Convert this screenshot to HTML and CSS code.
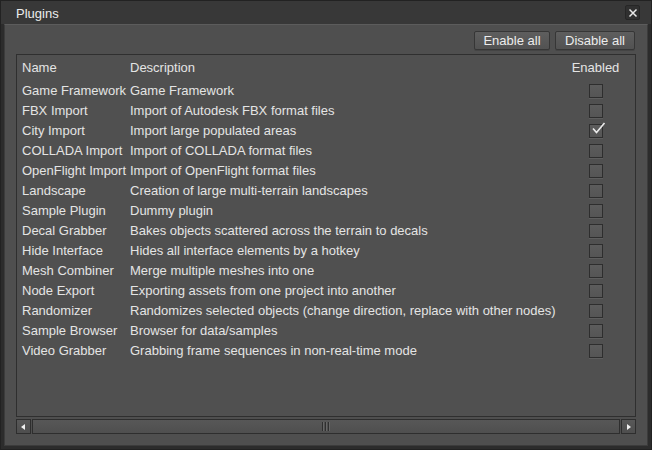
FILE: index.html
```html
<!DOCTYPE html>
<html lang="en">

<head>
    <meta charset="UTF-8">
    <title>Plugins</title>
    <link rel="stylesheet" href="styles.css">
</head>

<body>
    <div class="window">
        <div class="titlebar">
            <span class="title">Plugins</span>
            <button class="close">
                <svg width="10" height="10" viewBox="0 0 10 10"><path d="M1.5 1.5 L8.5 8.5 M8.5 1.5 L1.5 8.5" stroke="#e8e8e8" stroke-width="1.5" fill="none"/></svg>
            </button>
        </div>
        <div class="panel">
            <div class="actions">
                <button class="btn">Enable all</button>
                <button class="btn">Disable all</button>
            </div>
            <div class="list">
                <div class="row head">
                    <div class="name">Name</div>
                    <div class="desc">Description</div>
                    <div class="enabled">Enabled</div>
                </div>
                <div class="row"><div class="name">Game Framework</div><div class="desc">Game Framework</div><div class="enabled"><span class="check"></span></div></div>
                <div class="row"><div class="name">FBX Import</div><div class="desc">Import of Autodesk FBX format files</div><div class="enabled"><span class="check"></span></div></div>
                <div class="row"><div class="name">City Import</div><div class="desc">Import large populated areas</div><div class="enabled"><span class="check on"><svg width="15" height="13" viewBox="0 0 15 13"><path d="M2 6.5 L5.5 10.5 L13.5 1" stroke="#ececec" stroke-width="1.6" fill="none"/></svg></span></div></div>
                <div class="row"><div class="name">COLLADA Import</div><div class="desc">Import of COLLADA format files</div><div class="enabled"><span class="check"></span></div></div>
                <div class="row"><div class="name">OpenFlight Import</div><div class="desc">Import of OpenFlight format files</div><div class="enabled"><span class="check"></span></div></div>
                <div class="row"><div class="name">Landscape</div><div class="desc">Creation of large multi-terrain landscapes</div><div class="enabled"><span class="check"></span></div></div>
                <div class="row"><div class="name">Sample Plugin</div><div class="desc">Dummy plugin</div><div class="enabled"><span class="check"></span></div></div>
                <div class="row"><div class="name">Decal Grabber</div><div class="desc">Bakes objects scattered across the terrain to decals</div><div class="enabled"><span class="check"></span></div></div>
                <div class="row"><div class="name">Hide Interface</div><div class="desc">Hides all interface elements by a hotkey</div><div class="enabled"><span class="check"></span></div></div>
                <div class="row"><div class="name">Mesh Combiner</div><div class="desc">Merge multiple meshes into one</div><div class="enabled"><span class="check"></span></div></div>
                <div class="row"><div class="name">Node Export</div><div class="desc">Exporting assets from one project into another</div><div class="enabled"><span class="check"></span></div></div>
                <div class="row"><div class="name">Randomizer</div><div class="desc">Randomizes selected objects (change direction, replace with other nodes)</div><div class="enabled"><span class="check"></span></div></div>
                <div class="row"><div class="name">Sample Browser</div><div class="desc">Browser for data/samples</div><div class="enabled"><span class="check"></span></div></div>
                <div class="row"><div class="name">Video Grabber</div><div class="desc">Grabbing frame sequences in non-real-time mode</div><div class="enabled"><span class="check"></span></div></div>
            </div>
            <div class="scrollbar">
                <div class="arrow left"></div>
                <div class="handle"><span class="grip"></span></div>
                <div class="arrow right"></div>
            </div>
        </div>
    </div>
</body>

</html>
```
FILE: styles.css
```css
* {
    padding: 0;
    margin: 0;
    box-sizing: border-box;
    font-family: "Liberation Sans", Arial, sans-serif;
}

body {
    width: 652px;
    height: 450px;
    background-color: #2a2a2a;
    color: #e4e4e4;
    font-size: 13px;
    overflow: hidden;
}

.window {
    width: 652px;
    height: 450px;
    display: flex;
    flex-direction: column;
    background-color: #2c2c2c;
    border: 1px solid #222;
}

.titlebar {
    height: 23px;
    display: flex;
    align-items: center;
    justify-content: space-between;
    padding: 0 11px 0 15px;
    background-color: #383838;
}

.title {
    font-size: 13px;
    color: #ececec;
    margin-top: 2px;
}

.close {
    width: 15px;
    height: 15px;
    display: flex;
    align-items: center;
    justify-content: center;
    background-color: #303030;
    border: 1px solid #262626;
    border-radius: 2px;
}

.panel {
    flex: 1;
    margin: 0 3px 3px 3px;
    background-color: #4f4f4f;
    border: 1px solid #3c3c3c;
    border-top-color: #5c5c5c;
    display: flex;
    flex-direction: column;
    padding: 6px 11px 10px 11px;
}

.actions {
    display: flex;
    justify-content: flex-end;
    gap: 5px;
    padding-right: 1px;
}

.btn {
    height: 19px;
    padding: 0 8px;
    font-size: 13px;
    color: #ececec;
    background: linear-gradient(#5e5e5e, #525252);
    border: 1px solid #363636;
    border-radius: 2px;
    box-shadow: 0 1px 0 #444;
}

.btn:first-child {
    width: 76px;
}

.btn:last-child {
    width: 80px;
}

.list {
    margin-top: 4px;
    height: 363px;
    border: 1px solid #2f2f2f;
    background-color: #505050;
    padding-top: 1px;
}

.row {
    display: grid;
    grid-template-columns: 108px 1fr 78px;
    height: 20px;
    align-items: center;
    padding-left: 5px;
}

.row.head {
    height: 24px;
    padding-bottom: 2px;
}

.enabled {
    display: flex;
    justify-content: center;
    padding-right: 1px;
}

.check {
    width: 14px;
    height: 14px;
    margin-top: 1px;
    background: linear-gradient(#5c5c5c, #555);
    border: 1px solid #2e2e2e;
    box-shadow: 0 1px 0 #5e5e5e;
    position: relative;
}

.check svg {
    position: absolute;
    left: 1px;
    top: -3px;
}

.scrollbar {
    margin-top: 2px;
    height: 15px;
    display: flex;
    gap: 1px;
}

.arrow {
    width: 15px;
    background: linear-gradient(#585858, #4e4e4e);
    border: 1px solid #2e2e2e;
    position: relative;
}

.arrow::after {
    content: "";
    position: absolute;
    top: 4px;
    border-top: 3px solid transparent;
    border-bottom: 3px solid transparent;
}

.arrow.left::after {
    left: 4px;
    border-right: 4px solid #f0f0f0;
}

.arrow.right::after {
    left: 5px;
    border-left: 4px solid #f0f0f0;
}

.handle {
    flex: 1;
    background: linear-gradient(#575757, #4f4f4f);
    border: 1px solid #2e2e2e;
    display: flex;
    align-items: center;
    justify-content: center;
}

.grip {
    width: 8px;
    height: 9px;
    background: repeating-linear-gradient(90deg, #2f2f2f 0 1px, #666 1px 2px, #4f4f4f 2px 3px);
}
```
